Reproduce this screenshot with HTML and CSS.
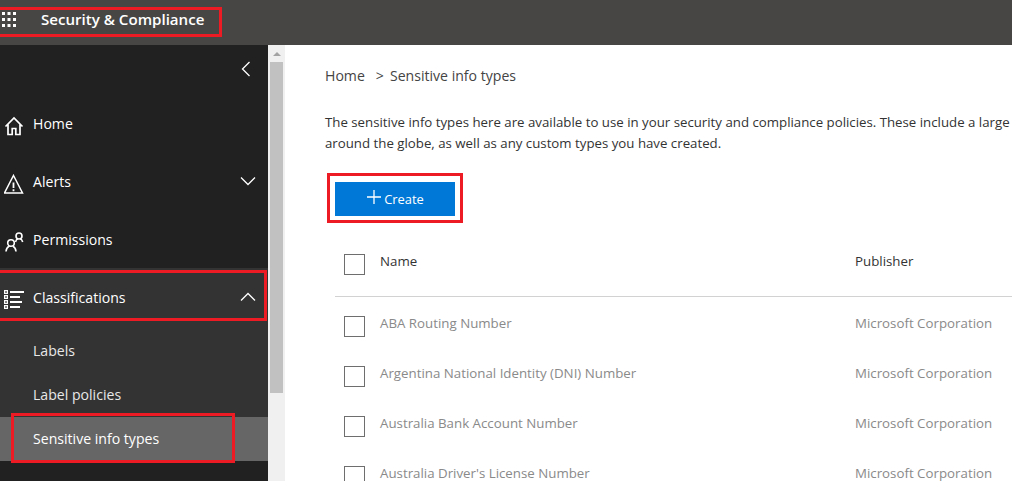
FILE: index.html
```html
<!DOCTYPE html>
<html lang="en">
<head>
<meta charset="utf-8">
<title>Security &amp; Compliance</title>
<link rel="stylesheet" href="styles.css">
</head>
<body>
<div class="page">
  <header class="topbar">
    <svg class="waffle" width="16" height="16" viewBox="0 0 16 16" fill="#fff"><rect x="1" y="0" width="3" height="3"/><rect x="6.500" y="0" width="3" height="3"/><rect x="12" y="0" width="3" height="3"/><rect x="1" y="6" width="3" height="3"/><rect x="6.500" y="6" width="3" height="3"/><rect x="12" y="6" width="3" height="3"/><rect x="1" y="12" width="3" height="3"/><rect x="6.500" y="12" width="3" height="3"/><rect x="12" y="12" width="3" height="3"/></svg>
    <span class="title">Security &amp; Compliance</span>
  </header>
  <div class="body">
    <nav class="sidebar">
      <div class="collapse"><svg width="12" height="16" viewBox="0 0 12 16" fill="none" stroke="#fff" stroke-width="1.3"><path d="M9.500 1 2.500 8l7 7"/></svg></div>
      <div class="nav-item">
        <svg class="nav-icon" width="20" height="20" viewBox="0 0 20 20" fill="none" stroke="#fff" stroke-width="1.700"><path d="M1.500 10.500 10 2l8.500 8.500M4 8.500V18.500h4.200V12.500h3.600v6H16V8.500"/></svg>
        <span class="nav-label">Home</span>
      </div>
      <div class="nav-item">
        <svg class="nav-icon" width="20" height="20" viewBox="0 0 20 20" fill="none" stroke="#fff" stroke-width="1.500"><path d="M9.500 1.500 18.500 19H.5Z"/><path d="M9.500 8.500v5.500M9.500 15.200v2" stroke-width="1.800"/></svg>
        <span class="nav-label">Alerts</span>
        <svg class="chev" width="16" height="10" viewBox="0 0 16 10" fill="none" stroke="#fff" stroke-width="1.3"><path d="M1 1.500 8 8.500l7-7"/></svg>
      </div>
      <div class="nav-item">
        <svg class="nav-icon" width="20" height="20" viewBox="0 0 20 20" fill="none" stroke="#fff" stroke-width="1.600"><circle cx="7" cy="11" r="3.300"/><circle cx="15" cy="4" r="3"/><path d="M2 19.500c.3-3 1.500-4.500 3-5.200M12 19.500c-.3-3-1.500-4.500-3-5.200M11.500 10c.5-2 1.500-3 2.500-3.200M16 6.800c1.200.3 2.200 1.400 2.700 3.200"/></svg>
        <span class="nav-label">Permissions</span>
      </div>
      <div class="nav-item open">
        <svg class="nav-icon" width="20" height="20" viewBox="0 0 20 20" fill="none"><g fill="#fff"><rect x="0" y="0" width="4" height="4"/><rect x="0" y="5" width="4" height="4"/><rect x="0" y="10" width="4" height="4"/><rect x="0" y="15" width="4" height="4"/></g><g fill="#888"><rect x="1" y="1" width="2" height="2"/><rect x="1" y="6" width="2" height="2"/><rect x="1" y="11" width="2" height="2"/><rect x="1" y="16" width="2" height="2"/></g><path d="M6 2h14M6 7h10M6 12h12M6 17h10" stroke="#fff" stroke-width="2"/></svg>
        <span class="nav-label">Classifications</span>
        <svg class="chev" width="16" height="10" viewBox="0 0 16 10" fill="none" stroke="#fff" stroke-width="1.3"><path d="M1 8.500 8 1.500l7 7"/></svg>
      </div>
      <div class="sub-group">
        <div class="sub-item">Labels</div>
        <div class="sub-item">Label policies</div>
        <div class="sub-item active">Sensitive info types</div>
      </div>
      <div class="nav-item">
        <svg class="nav-icon" width="20" height="20" viewBox="0 0 20 20" fill="none" stroke="#fff" stroke-width="1.500"><rect x="4.500" y="1" width="13" height="17"/></svg>
      </div>
    </nav>
    <div class="scrollbar">
      <div class="arrow"></div>
      <div class="thumb"></div>
    </div>
    <main class="content">
      <div class="crumbs"><span>Home</span><span class="crumb-sep">&gt;</span><span>Sensitive info types</span></div>
      <p class="intro">The sensitive info types here are available to use in your security and compliance policies. These include a large<br>around the globe, as well as any custom types you have created.</p>
      <button class="create" type="button"><svg class="plus" width="16" height="16" viewBox="0 0 16 16" stroke="#fff" stroke-width="1.300"><path d="M8 1v14M1 8h14"/></svg><span>Create</span></button>
      <div class="table">
        <div class="row head">
          <span class="check"></span><span class="name">Name</span><span class="pub">Publisher</span>
        </div>
        <div class="row"><span class="check"></span><span class="name">ABA Routing Number</span><span class="pub">Microsoft Corporation</span></div>
        <div class="row"><span class="check"></span><span class="name">Argentina National Identity (DNI) Number</span><span class="pub">Microsoft Corporation</span></div>
        <div class="row"><span class="check"></span><span class="name">Australia Bank Account Number</span><span class="pub">Microsoft Corporation</span></div>
        <div class="row"><span class="check"></span><span class="name">Australia Driver's License Number</span><span class="pub">Microsoft Corporation</span></div>
      </div>
    </main>
  </div>
  <div class="mark mark-title"></div>
  <div class="mark mark-class"></div>
  <div class="mark mark-sens"></div>
  <div class="mark mark-create"></div>
</div>
</body>
</html>
```
FILE: styles.css
```css
* { box-sizing: border-box; }
html, body { margin: 0; height: 100%; overflow: hidden; }
body { font-family: "Open Sans", "Noto Sans", sans-serif; font-size: 14px; background: #fff; }
.page { position: relative; width: 1012px; height: 481px; overflow: hidden; }

.topbar { height: 45px; background: #484644; display: flex; align-items: center; padding-left: 1px; color: #fff; }
.waffle { margin-top: -6px; }
.title { margin-left: 24px; margin-top: -8px; font-size: 15.1px; font-weight: 600; }

.body { display: flex; height: 436px; }
.sidebar { width: 268px; flex: none; background: #212121; color: #fff; overflow: hidden; }
.collapse { height: 49px; padding: 16px 0 0 240px; }
.nav-item { height: 58px; display: flex; align-items: center; padding-left: 4px; flex: none; }
.nav-icon { flex: none; margin-top: 6px; }
.nav-label { margin-left: 9px; font-size: 14.1px; flex: 1; margin-top: 1px; }
.chev { margin-right: 12px; }
.nav-item.open { background: #333; }
.sub-group { background: #333; height: 135px; padding-top: 3px; }
.sub-item { height: 44px; display: flex; align-items: center; padding: 0 0 2px 33px; font-size: 14.1px; color: #e8e8e8; }
.sub-item.active { background: #666; color: #fff; }

.scrollbar { width: 17px; flex: none; background: #f0f0f0; display: flex; flex-direction: column; align-items: center; }
.arrow { width: 0; height: 0; margin: 7px 0 5px; border: 4px solid transparent; border-top: 0; border-bottom: 4px solid #a3a3a3; }
.thumb { width: 13px; height: 331px; margin-top: 1px; background: #c1c1c1; }

.content { flex: 1; min-width: 0; padding: 21px 0 0 40px; color: #333; overflow: hidden; }
.crumbs { display: flex; font-size: 14.1px; height: 20px; line-height: 20px; color: #444; white-space: nowrap; }
.crumb-sep { margin: 0 6px 0 11px; }
.intro { margin: 26px 0 0; font-size: 13.25px; line-height: 21px; white-space: nowrap; color: #333; }
.create { display: flex; align-items: center; justify-content: center; gap: 2px; width: 120px; height: 34px; margin: 28px 0 0 10px; padding: 0; border: 0; background: #0078d7; color: #fff; font: inherit; font-size: 12.9px; }
.plus { margin-top: -4px; }
.table { margin: 17px 0 0 10px; }
.row { display: flex; align-items: center; height: 50px; white-space: nowrap; font-size: 13.3px; color: #8a8a8a; }
.row.head { height: 64px; padding-bottom: 6px; border-bottom: 1px solid #d2d2d2; color: #333; margin-bottom: 1px; }
.row.head .check { margin-top: 5px; }
.check { width: 21px; height: 21px; flex: none; margin-left: 9px; border: 1px solid #6e6e6e; background: #fff; margin-top: 6px; }
.name { width: 475px; margin-left: 15px; flex: none; }
.pub { flex: none; }
.row.head .name, .row.head .pub { margin-top: -2px; }

.mark { position: absolute; border: 3px solid #ed1c24; pointer-events: none; }
.mark-title { left: -3px; top: 7px; width: 225px; height: 30px; }
.mark-class { left: -3px; top: 270px; width: 270px; height: 51px; }
.mark-sens { left: 11px; top: 413px; width: 224px; height: 50px; }
.mark-create { left: 327px; top: 173px; width: 136px; height: 50px; }
```
